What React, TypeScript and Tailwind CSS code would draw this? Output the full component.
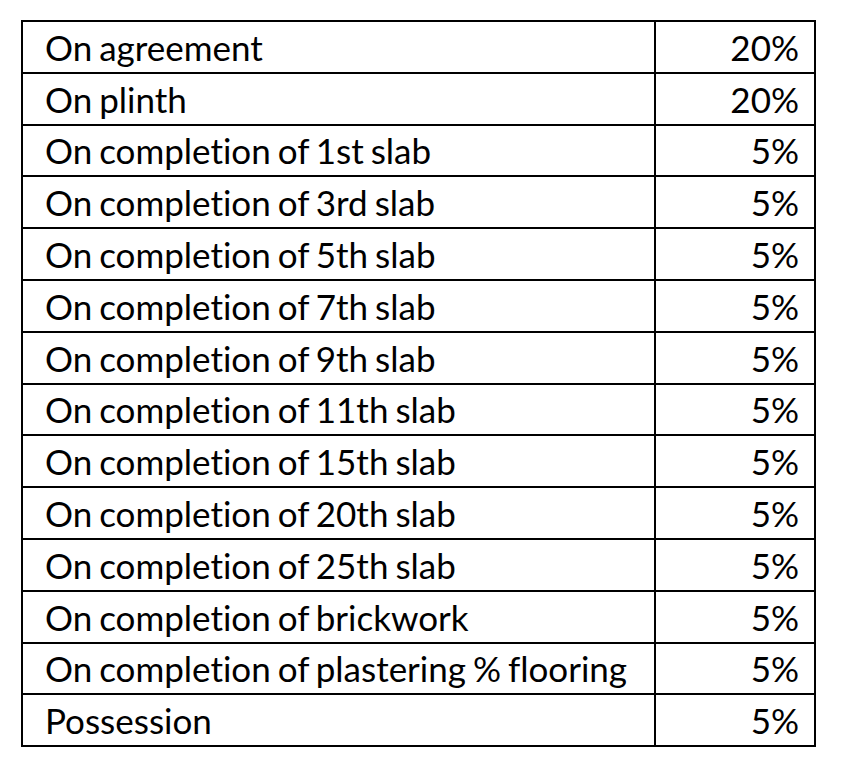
const rows: [string, string][] = [
  ['On agreement', '20%'],
  ['On plinth', '20%'],
  ['On completion of 1st slab', '5%'],
  ['On completion of 3rd slab', '5%'],
  ['On completion of 5th slab', '5%'],
  ['On completion of 7th slab', '5%'],
  ['On completion of 9th slab', '5%'],
  ['On completion of 11th slab', '5%'],
  ['On completion of 15th slab', '5%'],
  ['On completion of 20th slab', '5%'],
  ['On completion of 25th slab', '5%'],
  ['On completion of brickwork', '5%'],
  ['On completion of plastering % flooring', '5%'],
  ['Possession', '5%'],
]

export default function App() {
  return (
    <div
      className="w-[843px] h-[768px] bg-white pt-[20px] pl-[21px]"
      style={{ fontFamily: 'Lato, "Open Sans", sans-serif', fontVariantLigatures: 'none' }}
    >
      <table className="border-collapse w-[795px] text-black text-[35px] [word-spacing:-2px]">
        <tbody>
          {rows.map(([label, pct], i) => (
            <tr key={i} className="h-[51.8px]">
              <td className="border-2 border-black pl-[22px] pt-[1px] leading-none w-[633px]">{label}</td>
              <td className="border-2 border-black pr-[15px] pt-[1px] leading-none text-right">{pct}</td>
            </tr>
          ))}
        </tbody>
      </table>
    </div>
  )
}
